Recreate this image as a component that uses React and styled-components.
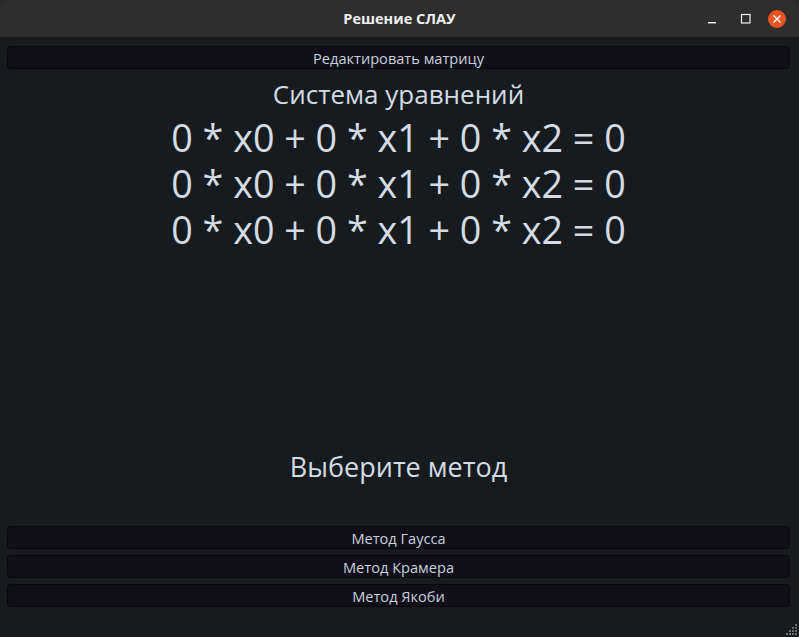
import React from "react";
import styled, { createGlobalStyle } from "styled-components";

const GlobalStyle = createGlobalStyle`
  html, body {
    margin: 0;
    padding: 0;
    background: #2b2b2b;
  }
  body {
    font-family: "Open Sans", "Noto Sans", "DejaVu Sans", sans-serif;
  }
`;

const Window = styled.div`
  width: 799px;
  height: 637px;
  display: flex;
  flex-direction: column;
  background: #171b1e;
  border-radius: 8px 8px 0 0;
  overflow: hidden;
  position: relative;
`;

const TitleBar = styled.div`
  height: 37px;
  flex: none;
  background: #2e2e2e;
  display: flex;
  align-items: center;
  justify-content: center;
  position: relative;
`;

const Title = styled.div`
  color: #f0f0f0;
  font-weight: 700;
  font-size: 14.5px;
`;

const Controls = styled.div`
  position: absolute;
  right: 13px;
  top: 0;
  height: 37px;
  display: flex;
  align-items: center;
  gap: 13px;
`;

const CtrlBtn = styled.div`
  width: 18px;
  height: 18px;
  display: flex;
  align-items: center;
  justify-content: center;
  border-radius: 50%;
  margin-right: ${(p) => p.gap || 0}px;
  background: ${(p) => (p.close ? "#e95420" : "transparent")};
`;

const Body = styled.div`
  flex: 1;
  display: flex;
  flex-direction: column;
  padding: 9px 9px 30px 7px;
`;

const Button = styled.button`
  height: 23px;
  width: 100%;
  background: #100f17;
  border: 1px solid #07070c;
  border-radius: 4px;
  color: #c9d1db;
  font-family: inherit;
  font-size: 14.6px;
  padding: 0;
  cursor: pointer;
`;

const Heading = styled.div`
  text-align: center;
  color: #d4dbe4;
  font-size: ${(p) => p.size || 26}px;
  line-height: 34px;
  margin-top: ${(p) => p.top || 0}px;
`;

const Equations = styled.div`
  display: flex;
  flex-direction: column;
  align-items: center;
  margin-top: 4px;
`;

const Equation = styled.div`
  color: #d4dbe4;
  font-size: 37.7px;
  line-height: 46px;
  white-space: pre;
`;

const Spacer = styled.div`
  flex: 1;
`;

const Methods = styled.div`
  display: flex;
  flex-direction: column;
  gap: 6px;
  margin-top: 42px;
`;

const Grip = styled.div`
  position: absolute;
  right: 2px;
  bottom: 2px;
  display: grid;
  grid-template-columns: repeat(4, 2px);
  gap: 1px;
`;

const Dot = styled.span`
  width: 2px;
  height: 2px;
  background: ${(p) => (p.on ? "#6a6e72" : "transparent")};
`;

const equations = [
  "0 * x0 + 0 * x1 + 0 * x2 = 0",
  "0 * x0 + 0 * x1 + 0 * x2 = 0",
  "0 * x0 + 0 * x1 + 0 * x2 = 0",
];

const methods = ["Метод Гаусса", "Метод Крамера", "Метод Якоби"];

export default function App() {
  const dots = [];
  for (let r = 0; r < 4; r++) {
    for (let c = 0; c < 4; c++) {
      dots.push(<Dot key={r * 4 + c} on={c >= 3 - r ? 1 : 0} />);
    }
  }
  return (
    <>
      <GlobalStyle />
      <Window>
        <TitleBar>
          <Title>Решение СЛАУ</Title>
          <Controls>
            <CtrlBtn gap={3}>
              <svg width="12" height="12" viewBox="0 0 12 12">
                <rect x="2" y="9" width="8" height="1.4" fill="#f0f0f0" />
              </svg>
            </CtrlBtn>
            <CtrlBtn>
              <svg width="12" height="12" viewBox="0 0 12 12">
                <rect x="1.5" y="1.5" width="8.5" height="8.5" fill="none" stroke="#f0f0f0" strokeWidth="1.2" />
              </svg>
            </CtrlBtn>
            <CtrlBtn close>
              <svg width="10" height="10" viewBox="0 0 10 10">
                <path d="M1.5 1.5 L8.5 8.5 M8.5 1.5 L1.5 8.5" stroke="#fff" strokeWidth="1.4" />
              </svg>
            </CtrlBtn>
          </Controls>
        </TitleBar>
        <Body>
          <Button>Редактировать матрицу</Button>
          <Heading top={8}>Система уравнений</Heading>
          <Equations>
            {equations.map((eq, i) => (
              <Equation key={i}>{eq}</Equation>
            ))}
          </Equations>
          <Spacer />
          <Heading size={27}>Выберите метод</Heading>
          <Methods>
            {methods.map((m) => (
              <Button key={m}>{m}</Button>
            ))}
          </Methods>
        </Body>
        <Grip>{dots}</Grip>
      </Window>
    </>
  );
}
